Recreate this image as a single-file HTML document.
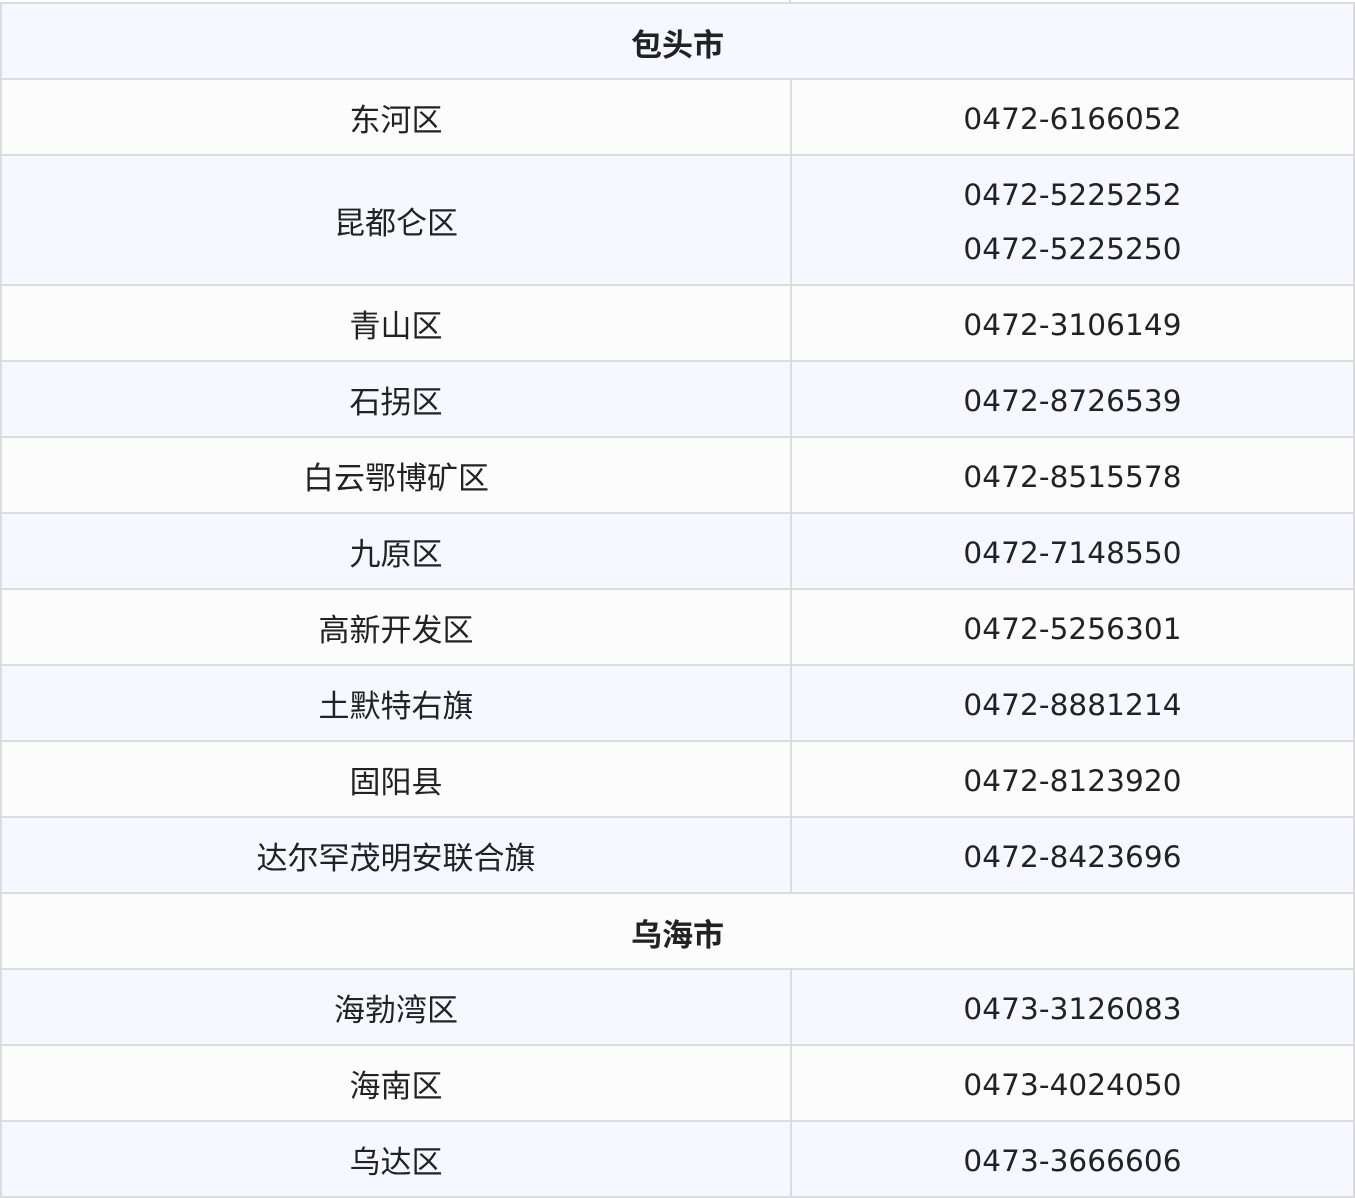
<!DOCTYPE html>
<html><head><meta charset="utf-8"><style>
html,body{margin:0;padding:0;width:1355px;height:1198px;overflow:hidden;background:#fff}
.r{position:absolute;left:0;width:1355px;box-sizing:border-box;border-top:2px solid #dcdcdc;border-left:2px solid #dcdcdc;border-right:2px solid #dcdcdc}
.b{background:#f5f9ff}.w{background:#fcfcfc}
.l,.n,.h{position:absolute;top:2px;bottom:-2px;display:flex;align-items:center;justify-content:center;color:#222}
.l{left:0;width:788px;top:0;bottom:0;font:31px "Liberation Sans","Noto Sans CJK SC",sans-serif;border-right:2px solid #dcdcdc}
.l span{position:relative;top:0px}
.n{left:790px;right:0;font:29.5px "DejaVu Sans",sans-serif;flex-direction:column;letter-spacing:0.1px}
.n div{line-height:54px}
.h{left:0;right:0;top:1px;bottom:-1px;font:bold 31px "Liberation Sans","Noto Sans CJK SC",sans-serif}
</style></head><body>
<div style="position:absolute;left:789px;top:0;width:2px;height:3px;background:#dcdcdc"></div>
<div class="r b" style="top:2px;height:76px"><div class="h">包头市</div></div>
<div class="r w" style="top:78px;height:76px"><div class="l"><span>东河区</span></div><div class="n">0472-6166052</div></div>
<div class="r b" style="top:154px;height:130px"><div class="l"><span>昆都仑区</span></div><div class="n"><div>0472-5225252</div><div>0472-5225250</div></div></div>
<div class="r w" style="top:284px;height:76px"><div class="l"><span>青山区</span></div><div class="n">0472-3106149</div></div>
<div class="r b" style="top:360px;height:76px"><div class="l"><span>石拐区</span></div><div class="n">0472-8726539</div></div>
<div class="r w" style="top:436px;height:76px"><div class="l"><span>白云鄂博矿区</span></div><div class="n">0472-8515578</div></div>
<div class="r b" style="top:512px;height:76px"><div class="l"><span>九原区</span></div><div class="n">0472-7148550</div></div>
<div class="r w" style="top:588px;height:76px"><div class="l"><span>高新开发区</span></div><div class="n">0472-5256301</div></div>
<div class="r b" style="top:664px;height:76px"><div class="l"><span>土默特右旗</span></div><div class="n">0472-8881214</div></div>
<div class="r w" style="top:740px;height:76px"><div class="l"><span>固阳县</span></div><div class="n">0472-8123920</div></div>
<div class="r b" style="top:816px;height:76px"><div class="l"><span>达尔罕茂明安联合旗</span></div><div class="n">0472-8423696</div></div>
<div class="r w" style="top:892px;height:76px"><div class="h">乌海市</div></div>
<div class="r b" style="top:968px;height:76px"><div class="l"><span>海勃湾区</span></div><div class="n">0473-3126083</div></div>
<div class="r w" style="top:1044px;height:76px"><div class="l"><span>海南区</span></div><div class="n">0473-4024050</div></div>
<div class="r b" style="top:1120px;height:78px;border-bottom:2px solid #dcdcdc"><div class="l"><span>乌达区</span></div><div class="n">0473-3666606</div></div>
</body></html>
